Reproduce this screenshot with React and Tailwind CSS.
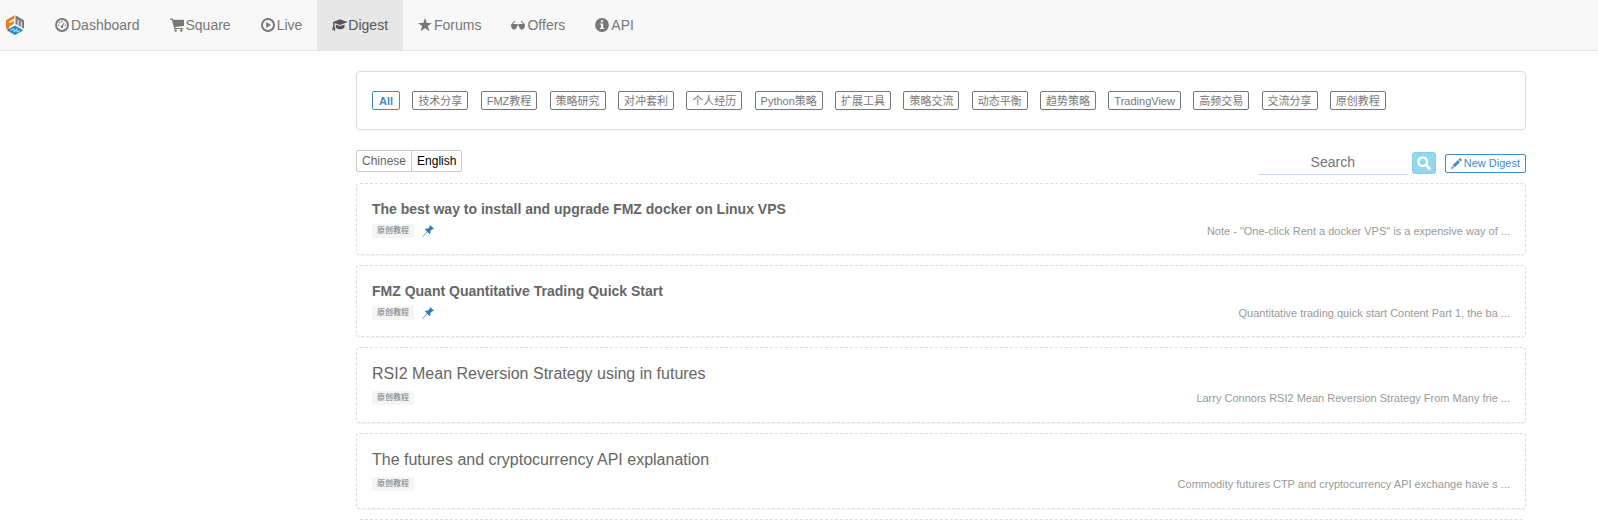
import { useState } from "react";

const DashboardIcon = () => (
  <svg viewBox="0 0 14 14" className="size-3.5" fill="currentColor">
    <circle cx="7" cy="7" r="6" fill="none" stroke="currentColor" strokeWidth="1.9" />
    <circle cx="3.6" cy="7.2" r="0.8" />
    <circle cx="4.6" cy="4.6" r="0.8" />
    <circle cx="7" cy="3.6" r="0.8" />
    <circle cx="10.4" cy="7.2" r="0.8" />
    <path d="M9.9 3.6 8 8.3a1.2 1.2 0 1 1-1.3-.7z" />
  </svg>
);

const CartIcon = () => (
  <svg viewBox="0 0 14 14" className="size-3.5" fill="currentColor">
    <path d="M0 .4h2.600l.5 1.400H14v6.200l-8.800 1 .3 1H13v1.100H4.400L1.800 1.700H0z" />
    <circle cx="5.6" cy="12.5" r="1.2" />
    <circle cx="11.3" cy="12.5" r="1.2" />
  </svg>
);

const PlayIcon = () => (
  <svg viewBox="0 0 14 14" className="size-3.5" fill="currentColor">
    <circle cx="7" cy="7" r="6" fill="none" stroke="currentColor" strokeWidth="1.9" />
    <path d="M5.1 4v6l4.8-3z" />
  </svg>
);

const CapIcon = () => (
  <svg viewBox="0 0 14 14" className="size-3.5 overflow-visible" fill="currentColor">
    <path d="M8 1.200 15.600 4 8 7 2.500 5v2.600l.8 4.800-1.100.5-.6-2-.5 1.500-1-.4 1-4V4.100z" />
    <path d="M3.800 6.500 8 8.100l4.500-1.600v3C10.800 11.100 9.500 11.200 8.200 11.200s-2.900-.1-4.400-1.700z" />
  </svg>
);

const StarIcon = () => (
  <svg viewBox="0 0 14 14" className="size-3.5" fill="currentColor">
    <path d="m7 0 1.800 4.900H14L9.800 8l1.600 5.200L7 10.100l-4.400 3.100L4.200 8 0 4.900h5.200z" />
  </svg>
);

const GlassesIcon = () => (
  <svg viewBox="0 0 14 14" className="size-3.5" fill="currentColor">
    <path d="M2.800 3.200h1.300v1H3.200L1.900 6h3.500c.8 0 1 .5 1.600.5s.8-.5 1.600-.5h3.500l-1.300-1.800h-.9v-1h1.300L14 6.800v1.400h-.3c0 2-1 3.200-2.800 3.200S8.200 10.100 8 8.200c-.1-.8-1.900-.8-2 0-.2 1.900-1.100 3.200-2.900 3.200S.300 10.200.3 8.200H0V6.800z" />
  </svg>
);

const InfoIcon = () => (
  <svg viewBox="0 0 14 14" className="size-3.5" fill="currentColor">
    <path
      fillRule="evenodd"
      d="M7 .1a6.900 6.900 0 1 1 0 13.800A6.900 6.900 0 0 1 7 .1zM5.900 2.300v1.900h2.200V2.300zM4.900 5.400v1.100h1v3.400h-1V11h4.300V9.900h-1V5.400z"
    />
  </svg>
);

const SearchIcon = () => (
  <svg viewBox="0 0 14 14" className="size-3.5" fill="none" stroke="currentColor">
    <circle cx="5.700" cy="5.700" r="4.300" strokeWidth="2.300" />
    <path d="m9 9 3.400 3.400" strokeWidth="2.800" strokeLinecap="round" />
  </svg>
);

const PencilIcon = () => (
  <svg viewBox="0 0 12 12" className="size-[11px]" fill="currentColor">
    <path d="M9.300.4q.5-.5 1 0l1.300 1.300q.5.500 0 1l-1.100 1.100-2.300-2.300zM7.500 2.200l2.300 2.300-5.700 5.700-2.300-2.300zM1.200 8.600l2.200 2.200L0 12z" />
  </svg>
);

const PinIcon = () => (
  <svg viewBox="0 0 12 12" className="size-3" fill="currentColor">
    <path d="M8.200 0 12 3.800l-.8.5-1-.1-2 2.100c.5 1.200.3 2.100-.4 2.900L5.500 6.900.300 12 0 11.700l5.100-5.200-2.300-2.300c.8-.7 1.800-.9 2.900-.4l2.100-2-.1-1z" />
  </svg>
);

const Logo = () => (
  <svg viewBox="0 0 18 20" className="h-5 w-[18px]">
    <path d="M0 5.200 8.500.3v3.200L3.200 6.600v1.700l4.500-2.600v3.200l-4.500 2.600v4L0 13.600z" fill="#e67e22" />
    <path d="M9.500.3 18 5.200v8.600l-2.200-1.200V6.800l-1-.5v5.700l-2.200-1.300V5l-1-.5v5.700l-2.100-1.100z" fill="#7c7c7c" />
    <path d="m9 10.600 8.200 4.700L9 20 .8 15.300z" fill="#1e88cf" />
    <path d="m4.300 15.500 3.400-1.900.5 3.600 2.500-3.400.4 3.300 2.700-1.700" fill="none" stroke="#f8f8f8" strokeWidth=".8" />
  </svg>
);

const navItems = [
  { label: "Dashboard", Icon: DashboardIcon },
  { label: "Square", Icon: CartIcon },
  { label: "Live", Icon: PlayIcon },
  { label: "Digest", Icon: CapIcon },
  { label: "Forums", Icon: StarIcon },
  { label: "Offers", Icon: GlassesIcon },
  { label: "API", Icon: InfoIcon },
];

const tags = [
  "All",
  "技术分享",
  "FMZ教程",
  "策略研究",
  "对冲套利",
  "个人经历",
  "Python策略",
  "扩展工具",
  "策略交流",
  "动态平衡",
  "趋势策略",
  "TradingView",
  "高频交易",
  "交流分享",
  "原创教程",
];

const digests = [
  {
    title: "The best way to install and upgrade FMZ docker on Linux VPS",
    summary: 'Note - "One-click Rent a docker VPS" is a expensive way of ...',
    pinned: true,
  },
  {
    title: "FMZ Quant Quantitative Trading Quick Start",
    summary: "Quantitative trading quick start Content Part 1, the ba ...",
    pinned: true,
  },
  {
    title: "RSI2 Mean Reversion Strategy using in futures",
    summary: "Larry Connors RSI2 Mean Reversion Strategy From Many frie ...",
  },
  {
    title: "The futures and cryptocurrency API explanation",
    summary: "Commodity futures CTP and cryptocurrency API exchange have s ...",
  },
];

const Navbar = () => (
  <nav className="flex h-[51px] border-b border-[#e7e7e7] bg-[#f8f8f8] pl-1.5">
    <a href="#" aria-label="FMZ" className="mr-4 flex items-center">
      <Logo />
    </a>
    {navItems.map(({ label, Icon }) => (
      <a
        key={label}
        href="#"
        className={
          label === "Digest"
            ? "flex items-center gap-0.5 bg-[#e7e7e7] px-[15px] text-[#555]"
            : "flex items-center gap-0.5 px-[15px] text-[#777]"
        }
      >
        <Icon />
        {label}
      </a>
    ))}
  </nav>
);

const DigestCard = ({ title, summary, pinned }) => (
  <article
    className={
      pinned
        ? "h-[72px] rounded-sm border border-dashed border-[#ddd] px-[15px] pt-[15px] shadow-[0_1px_1px_rgba(0,0,0,0.05)]"
        : "h-[76px] rounded-sm border border-dashed border-[#ddd] px-[15px] pt-4 shadow-[0_1px_1px_rgba(0,0,0,0.05)]"
    }
  >
    <h4 className={pinned ? "mb-1 leading-5 font-bold" : "mb-1.5 text-base leading-5"}>
      <a href="#" className="text-[#666]">
        {title}
      </a>
    </h4>
    <div className="flex items-center justify-between">
      <div className="flex items-center gap-2">
        <span className="rounded-xs bg-[#f5f5f5] px-[5px] text-[8px] leading-[14px] font-bold text-[#999]">
          原创教程
        </span>
        {pinned ? (
          <span className="text-[#337ab7]">
            <PinIcon />
          </span>
        ) : null}
      </div>
      <p className="text-[11px] leading-4 text-[#999]">{summary}</p>
    </div>
  </article>
);

const App = () => {
  const [tag, setTag] = useState("All");
  const [language, setLanguage] = useState("English");
  const [keyword, setKeyword] = useState("");

  return (
    <div className="h-screen overflow-hidden bg-white font-['Liberation_Sans','Noto_Sans_CJK_SC',sans-serif] text-sm">
      <Navbar />
      <main className="pt-5 pr-[72px] pl-[356px]">
        <section className="rounded border border-[#ddd] px-[15px] py-[19px] shadow-[0_1px_1px_rgba(0,0,0,0.05)]">
          <div className="flex max-w-[1014px] justify-between">
            {tags.map((name) => (
              <button
                key={name}
                type="button"
                onClick={() => setTag(name)}
                className={
                  name === tag
                    ? "h-[19px] cursor-pointer rounded-xs border border-[#428bca] px-1.5 text-[11px] leading-4 font-bold text-[#428bca]"
                    : "h-[19px] cursor-pointer rounded-xs border border-[#777] px-[5px] text-[11px] leading-4 text-[#777]"
                }
              >
                {name}
              </button>
            ))}
          </div>
        </section>

        <div className="mt-5 mb-2 flex h-[25px] items-start justify-between">
          <div className="flex h-[22px] divide-x divide-[#ccc] rounded-xs border border-[#ccc] text-xs">
            {["Chinese", "English"].map((name) => (
              <button
                key={name}
                type="button"
                onClick={() => setLanguage(name)}
                className={
                  name === language
                    ? "cursor-pointer px-[5px] text-black"
                    : "cursor-pointer px-[5px] text-[#666]"
                }
              >
                {name}
              </button>
            ))}
          </div>
          <form
            className="flex h-[25px] items-end"
            onSubmit={(e) => e.preventDefault()}
          >
            <input
              type="text"
              aria-label="Search"
              placeholder="Search"
              value={keyword}
              onChange={(e) => setKeyword(e.target.value)}
              className="h-[25px] w-[150px] border-b border-[#c8d6ff] text-center outline-none placeholder:text-[#757575]"
            />
            <button
              type="submit"
              aria-label="Search"
              className="mb-px ml-1 flex h-[22px] w-6 cursor-pointer items-center justify-center rounded-[3px] border border-[#87cfe3] bg-[#94d6ea] text-white"
            >
              <SearchIcon />
            </button>
            <button
              type="button"
              className="mb-0.5 ml-[9px] flex h-[19px] cursor-pointer items-center gap-0.5 rounded-xs border border-[#428bca] px-[5px] text-[11px] text-[#428bca]"
            >
              <PencilIcon />
              New Digest
            </button>
          </form>
        </div>

        <div className="flex flex-col gap-2.5">
          {digests.map((digest) => (
            <DigestCard key={digest.title} {...digest} />
          ))}
          <article className="h-[76px] rounded-sm border border-dashed border-[#ddd]" />
        </div>
      </main>
    </div>
  );
};

export default App;
